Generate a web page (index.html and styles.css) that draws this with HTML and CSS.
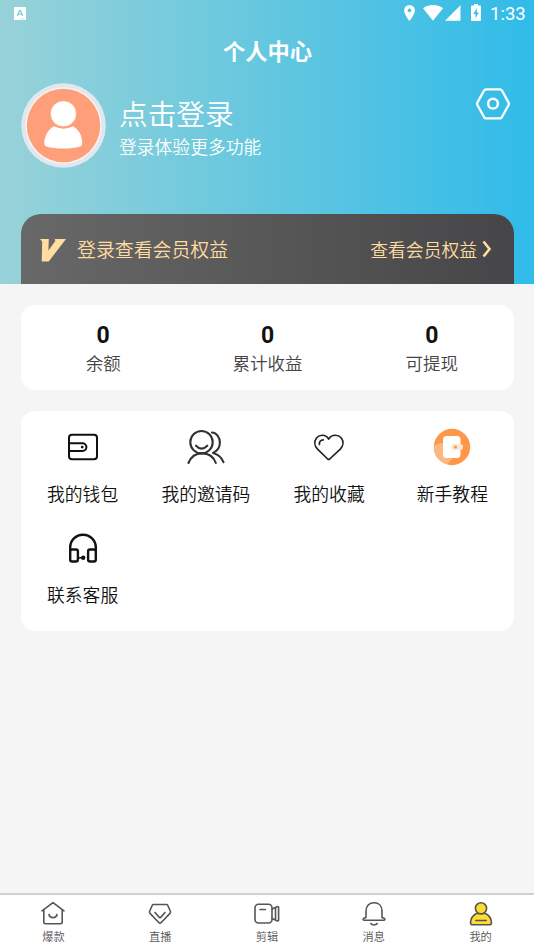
FILE: index.html
```html
<!DOCTYPE html>
<html lang="zh-CN">
<head>
<meta charset="utf-8">
<title>个人中心</title>
<link rel="stylesheet" href="styles.css">
</head>
<body>
<header class="hero">
  <div class="status">
    <svg class="status-app" width="12" height="13" viewBox="0 0 12 13"><rect width="12" height="13" rx=".8" fill="#fff"/><path d="M3.300 9 5.400 3.700h1.200L8.700 9M4.200 7.200h3.600" fill="none" stroke="#84ccd7" stroke-width="1.300"/><path d="M6 11.800h5" stroke="#84ccd7" stroke-width=".8" stroke-dasharray="1 .6"/></svg>
    <div class="status-right">
      <svg class="pin" width="11" height="16" viewBox="0 0 11 16"><path fill="#fff" fill-rule="evenodd" d="M5.500 0A5.400 5.400 0 0 0 .1 5.400C.1 9.300 5.500 16 5.500 16s5.400-6.700 5.400-10.600A5.400 5.400 0 0 0 5.500 0Zm0 3.400a1.900 1.900 0 1 1 0 3.800 1.900 1.900 0 0 1 0-3.800Z"/></svg>
      <svg class="wifi" width="20" height="16" viewBox="0 0 20 16"><path fill="#fff" d="M0 3.300C5.700-1.100 14.300-1.100 20 3.300L10 15.700Z"/></svg>
      <svg class="signal" width="16" height="16" viewBox="0 0 16 16"><path fill="#fff" d="M15.500.3v15.400H0Z"/></svg>
      <svg class="battery" width="10" height="17" viewBox="0 0 10 17"><path fill="#fff" fill-rule="evenodd" d="M3 0h4v1.500h2.200q.8 0 .8.8v13.900q0 .8-.8.8H.8q-.8 0-.8-.8V2.300q0-.8.8-.8H3ZM6 4 2.200 10h2.300v4.500L7.800 8.500H5.700Z"/></svg>
      <span class="clock">1:33</span>
    </div>
  </div>
  <h1 class="title">个人中心</h1>
  <section class="profile">
    <svg class="avatar" width="85" height="85" viewBox="0 0 85 85"><circle cx="42.500" cy="42.500" r="42.300" fill="#e1e6ef"/><circle cx="42.500" cy="42.500" r="38.200" fill="#f7f5f4"/><circle cx="42.500" cy="42.500" r="36.700" fill="#ff9f7a"/><path fill="#fff" d="M33 43.300Q42.500 48 52 43.300C58.500 47 61.200 53.500 61.200 60.500Q61.200 62.800 59 63.500C50 66.300 34 66.300 25.500 63.500Q23.300 62.800 23.300 60.500C23.500 53.500 26.500 47 33 43.300Z"/><circle cx="42.400" cy="30.800" r="13" fill="#fff" stroke="#ff9f7a" stroke-width=".7"/></svg>
    <div class="profile-text">
      <div class="name">点击登录</div>
      <div class="hint">登录体验更多功能</div>
    </div>
    <svg class="settings" width="36" height="34" viewBox="0 0 36 34" fill="none" stroke="#fff"><path stroke-width="2.300" stroke-linejoin="round" d="M11 2.300h14q1.200 0 1.800 1l6.800 12.300q.6 1.200 0 2.400l-6.800 12.300q-.6 1-1.800 1H11q-1.200 0-1.800-1L2.400 18q-.6-1.200 0-2.400L9.200 3.300q.6-1 1.800-1Z"/><circle cx="18" cy="16.700" r="4.900" stroke-width="2.500"/></svg>
  </section>
  <section class="vip">
    <svg class="vip-logo" width="26" height="23" viewBox="0 0 26 23"><path fill="#ffdca0" d="M0 0h8.800L8.400 11.500 15.300 2 14.700 0H26L9.300 21.700Q8.500 22.600 7.500 22.600H1.700L2.200 2.500Z"/></svg>
    <span class="vip-title">登录查看会员权益</span>
    <span class="vip-link">查看会员权益</span>
    <svg class="vip-arrow" width="10" height="18" viewBox="0 0 10 18"><path d="m1.500 1.500 6 7.500-6 7.500" fill="none" stroke="#ffdca0" stroke-width="2.600"/></svg>
  </section>
</header>
<main class="content">
  <section class="card stats">
    <div class="stat"><b>0</b><span>余额</span></div>
    <div class="stat"><b>0</b><span>累计收益</span></div>
    <div class="stat"><b>0</b><span>可提现</span></div>
  </section>
  <section class="card menu">
    <div class="entry">
      <svg width="38" height="38" viewBox="0 0 38 38" fill="none" stroke="#111" stroke-width="2"><rect x="5" y="6.700" width="28" height="24.600" rx="3"/><path d="M5 15.200h13.500a3.900 3.900 0 0 1 0 7.800H5"/><circle cx="18.200" cy="19.100" r="1.400" fill="#111" stroke="none"/></svg>
      <span>我的钱包</span>
    </div>
    <div class="entry">
      <svg width="38" height="38" viewBox="0 0 38 38" fill="none" stroke="#333" stroke-width="2.100" stroke-linecap="round"><circle cx="14.500" cy="14.200" r="11.200"/><path d="M9 17.700q5.500 5.800 11.300 0M25 4.500c4.800.4 7.900 5 7.900 10 0 4.600-2.800 8.600-6.900 10.400M1.500 35C4 28.500 9 25.400 15 25.400s11.500 3.100 13.800 9.600M26 25c4.800 1.200 8.700 4.500 10.500 9.200"/></svg>
      <span>我的邀请码</span>
    </div>
    <div class="entry">
      <svg width="38" height="38" viewBox="0 0 38 38" fill="none" stroke="#222" stroke-width="1.700" stroke-linecap="round" stroke-linejoin="round"><path d="M18.700 11C15.200 5.800 9.500 6.500 6.500 10c-2.600 3.500-2 8 1 11.200L17.700 31q1 .8 2 0L30.300 21.200c3-3.200 3.600-7.700 1-11.200C28.300 6.500 22.200 5.800 18.700 11Z"/><path d="M9.400 16.500c-.4-2.700 1.200-4.500 3.900-4.700"/></svg>
      <span>我的收藏</span>
    </div>
    <div class="entry">
      <svg width="38" height="38" viewBox="0 0 38 38"><defs><clipPath id="disc"><circle cx="19" cy="19" r="18.200"/></clipPath></defs><circle cx="19" cy="19" r="18.200" fill="#ff9748"/><circle cx="9" cy="26" r="11" fill="#ffb780" clip-path="url(#disc)"/><rect x="10" y="8" width="17.500" height="22" rx="3.500" fill="#fff"/><path d="M21.500 16h6q2 0 2.400 1.500V20q-.4 2-2.400 2h-6a3 3 0 0 1 0-6Z" fill="#ffe4cf"/><circle cx="22.500" cy="19" r="1.600" fill="#ff9748"/></svg>
      <span>新手教程</span>
    </div>
    <div class="entry">
      <svg width="38" height="38" viewBox="0 0 38 38" fill="none" stroke="#111" stroke-width="2.400"><path d="M6.200 21.500v-3a12.800 12.800 0 0 1 25.600 0v3"/><rect x="6.200" y="20.500" width="7.700" height="12" rx="2"/><rect x="24.100" y="20.500" width="7.700" height="12" rx="2"/><path stroke-width="1.600" d="M14 28.800h5"/><circle cx="19.200" cy="28.800" r="2.200" fill="#111" stroke="none"/></svg>
      <span>联系客服</span>
    </div>
  </section>
</main>
<nav class="tabs">
  <div class="tab"><svg width="28" height="26" viewBox="0 0 28 26"><path d="M3 9.800 14 1.600 25 9.800M4.800 8.600V21q0 1.700 1.700 1.700h15q1.700 0 1.700-1.700V8.600M10 13.500c.8 4.200 7.200 4.200 8 0"/></svg><span>爆款</span></div>
  <div class="tab"><svg width="28" height="26" viewBox="0 0 28 26"><path d="M7.500 3.500h13q.8 0 1.200.7l2.800 6.300q.3.900-.3 1.600L15 21.700q-1 .9-2 0l-9.200-9.600q-.6-.7-.3-1.600l2.800-6.300q.4-.7 1.200-.7Z"/><path d="M9 11.500l4.300 4.900q.7.600 1.400 0L19 11.500"/></svg><span>直播</span></div>
  <div class="tab"><svg width="28" height="26" viewBox="0 0 28 26"><rect x="2" y="3.300" width="17" height="18.700" rx="3.500"/><path d="M7 8.500h5.500M19 8l5-2.300q1.600-.7 1.600 1v12q0 1.700-1.600 1L19 17.500M22.500 7v11.500"/></svg><span>剪辑</span></div>
  <div class="tab"><svg width="28" height="26" viewBox="0 0 28 26"><path d="M6 16.500V10C6 4.800 9.200 1.800 14 1.800S22 4.800 22 10v6.500l2.600 1q.8 1.700-.8 1.700H4.200q-1.600 0-.8-1.700ZM10.800 22.500c1.400 1.900 5 1.900 6.400 0"/></svg><span>消息</span></div>
  <div class="tab"><svg width="28" height="26" viewBox="0 0 28 26"><path fill="#ffdc33" d="M9.500 12.500h9c3.500 1.800 5.800 5 6 9 0 1.600-.8 2.300-2 2.300h-17c-1.200 0-2-.7-2-2.300.2-4 2.500-7.200 6-9Z"/><circle fill="#ffdc33" cx="14" cy="7.300" r="5.600"/><path d="M8.800 19.500h10.400"/></svg><span>我的</span></div>
</nav>
</body>
</html>
```
FILE: styles.css
```css
* { box-sizing: border-box; }
body {
  margin: 0;
  height: 950px;
  display: flex;
  flex-direction: column;
  overflow: hidden;
  background: #f5f5f5;
  color: #111;
  font-family: "Noto Sans CJK SC", sans-serif;
  font-weight: 350;
}
svg { display: block; flex: none; }
.hero {
  height: 284px;
  padding: 0 20px 0 21px;
  display: flex;
  flex-direction: column;
  background: linear-gradient(90deg, #98d2d8, #64c7df 50%, #30bbe9);
  color: #fff;
}
.status {
  height: 27px;
  margin: 0 -11px 0 -7px;
  display: flex;
  align-items: center;
  justify-content: space-between;
}
.status-right { display: flex; align-items: center; }
.pin, .wifi, .signal { margin-top: -1px; }
.pin { margin-right: -1px; }
.wifi { margin-left: 9px; }
.signal { margin-left: 2px; }
.battery { margin-left: 10px; margin-top: -2px; }
.clock { margin-left: 9px; width: 35px; white-space: nowrap; font: 18.5px/27px Roboto, sans-serif; padding-top: 1px; }
.title {
  margin: 7px 0 0;
  height: 32px;
  text-align: center;
  font-size: 22.3px;
  line-height: 32px;
  font-weight: 700;
}
.profile { display: flex; margin-top: 17px; height: 85px; }
.profile-text { flex: 1; margin-left: 13px; padding-top: 10px; }
.name { font-size: 28.7px; line-height: 40px; }
.hint { font-size: 17.8px; line-height: 27px; }
.settings { margin: 4px 3px 0 0; }
.vip {
  height: 70px;
  margin-top: 46px;
  padding: 0 22px 0 19px;
  display: flex;
  align-items: center;
  border-radius: 20px 20px 0 0;
  background: linear-gradient(90deg, #686868, #464648);
  color: #ffdca0;
}
.vip-logo { margin-top: 3px; }
.vip-title { margin: -2px 0 0 11px; font-size: 18.9px; }
.vip-link { margin-left: auto; font-size: 17.8px; }
.vip-arrow { margin: -1px 0 0 5px; }
.content { flex: 1; padding: 21px 20px 0 21px; }
.card { border-radius: 14px; background: #fff; }
.stats { height: 85px; display: grid; grid-template-columns: repeat(3, 1fr); padding-top: 17px; }
.stat { display: flex; flex-direction: column; align-items: center; }
.stat b { font: 700 23px/27px Roboto, sans-serif; }
.stat span { color: #444; font-size: 17.5px; line-height: 28px; }
.menu {
  height: 220px;
  margin-top: 21px;
  padding-top: 17px;
  display: grid;
  grid-template-columns: repeat(4, 1fr);
  grid-auto-rows: 101px;
}
.entry { display: flex; flex-direction: column; align-items: center; }
.entry span { margin-top: 13px; font-size: 17.8px; line-height: 28px; }
.tabs {
  height: 57px;
  border-top: 2px solid #d0d0d0;
  display: grid;
  grid-template-columns: repeat(5, 1fr);
  background: #fff;
}
.tab { display: flex; flex-direction: column; align-items: center; padding-top: 6px; color: #555; }
.tab svg { fill: none; stroke: #555; stroke-width: 1.6; stroke-linecap: round; stroke-linejoin: round; }
.tab span { margin-top: 1px; font-size: 11.2px; line-height: 17px; }
```
